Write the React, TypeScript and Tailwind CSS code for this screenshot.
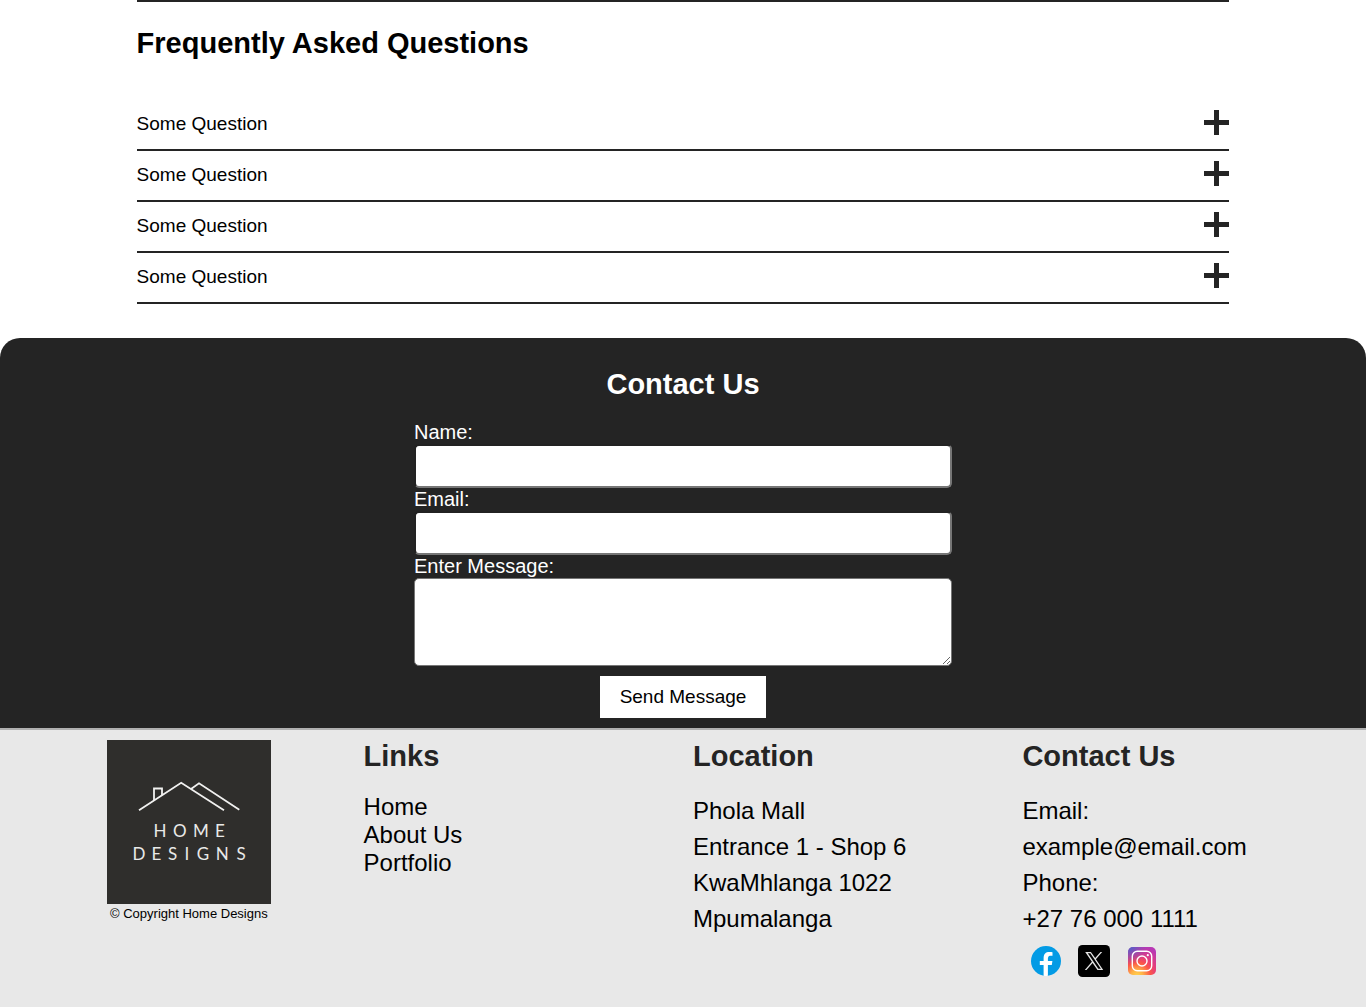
import { useId } from "react";

const questions = ["Some Question", "Some Question", "Some Question", "Some Question"];
const links = ["Home", "About Us", "Portfolio"];
const address = ["Phola Mall", "Entrance 1 - Shop 6", "KwaMhlanga 1022", "Mpumalanga"];

function Plus() {
  return (
    <svg className="size-[25px]" viewBox="0 0 25 25" fill="#242424" shapeRendering="crispEdges" aria-hidden="true">
      <path d="M10 0h5v10h10v5H15v10h-5V15H0v-5h10z" />
    </svg>
  );
}

function Logo() {
  return (
    <svg className="size-[164px]" viewBox="0 0 164 164" role="img" aria-label="Home Designs">
      <rect width="164" height="164" fill="#2f2e2c" />
      <g fill="none" stroke="#f1f1f0" strokeWidth="1.8">
        <path d="M32 70.3 74.2 42.7 117 70.3" />
        <path d="M84 49 92 43.3 132.3 69.8" />
        <path d="M47 60.3V48.500h8v6.800" />
      </g>
      <g fill="#e9e9e8" fontFamily="Lato, sans-serif" fontSize="17" textAnchor="middle">
        <text x="53 72.700 94 113" y="97">HOME</text>
        <text x="32 49.500 65.700 80 96 115.300 134" y="119.500">DESIGNS</text>
      </g>
    </svg>
  );
}

function FacebookIcon() {
  return (
    <svg className="size-8" viewBox="0 0 32 32" aria-hidden="true">
      <circle cx="16" cy="16" r="15" fill="#039be5" />
      <path fill="#fff" d="M17.900 20h3.900l.6-4h-4.500v-2.200c0-1.600.6-3.100 2.100-3.100h2.500V7.200c-.4-.1-1.400-.2-3.100-.2-3.700 0-5.800 1.900-5.800 6.300V16H9.800v4h3.800v10.800c.8.1 1.500.2 2.300.2.700 0 1.400-.1 2-.2z" />
    </svg>
  );
}

function XIcon() {
  return (
    <svg className="size-8" viewBox="0 0 32 32" aria-hidden="true">
      <rect width="32" height="32" rx="4.500" fill="#000" />
      <path
        fill="#e4e4e4"
        fillRule="evenodd"
        d="M7.200 7h5.700l4.300 6.100L22.500 7h1.700l-6.300 7.200L25.200 25h-5.700l-4.900-7.100L8.500 25H6.800l7.100-8.200zm2.600 1.300 10.500 15.400h2.600L12.300 8.300z"
      />
    </svg>
  );
}

function InstagramIcon() {
  return (
    <svg className="size-8" viewBox="0 0 32 32" aria-hidden="true">
      <defs>
        <radialGradient id="ig-warm" cx="11" cy="31" r="30" gradientUnits="userSpaceOnUse">
          <stop offset="0" stopColor="#ffd54f" />
          <stop offset=".2" stopColor="#ffb347" />
          <stop offset=".45" stopColor="#fb5648" />
          <stop offset=".65" stopColor="#e63d7a" />
          <stop offset="1" stopColor="#b838b4" />
        </radialGradient>
        <radialGradient id="ig-cool" cx="3" cy="1" r="19" gradientUnits="userSpaceOnUse">
          <stop offset="0" stopColor="#4168c9" />
          <stop offset="1" stopColor="#7150c9" stopOpacity="0" />
        </radialGradient>
      </defs>
      <rect x="2" y="2" width="28" height="28" rx="5" fill="url(#ig-warm)" />
      <rect x="2" y="2" width="28" height="28" rx="5" fill="url(#ig-cool)" />
      <g fill="none" stroke="#fff" strokeWidth="1.400">
        <rect x="6.300" y="6.300" width="19.400" height="19.400" rx="5" />
        <circle cx="16" cy="16" r="5" />
      </g>
      <circle cx="21.800" cy="10.200" r="1.100" fill="#fff" />
    </svg>
  );
}

function TextField({ label, type }: { label: string; type: string }) {
  const id = useId();
  return (
    <>
      <label htmlFor={id} className="text-xl leading-[23px]">{label}</label>
      <input
        id={id}
        type={type}
        className="h-11 w-full rounded-[5px] border-2 border-[#767676] border-t-[#222222] border-l-[#222222] bg-white px-2 text-black"
      />
    </>
  );
}

export default function App() {
  return (
    <div className="bg-white font-['Liberation_Sans',Arial,sans-serif] text-black">
      <section className="mx-auto w-4/5 border-t-2 border-[#242424] pb-[34px]">
        <h2 className="pt-[25px] pb-10 text-[29px] leading-[33px] font-bold">Frequently Asked Questions</h2>
        {questions.map((question, index) => (
          <button
            key={index}
            type="button"
            className="flex w-full items-start justify-between border-b-2 border-[#242424] pt-2.5 pb-3 text-left"
          >
            <span className="text-[19px] leading-[27px]">{question}</span>
            <Plus />
          </button>
        ))}
      </section>

      <section className="rounded-t-[20px] bg-[#242424] pt-[30px] pb-2.5 text-white">
        <h2 className="text-center text-[29px] leading-[33px] font-bold">Contact Us</h2>
        <form className="mx-auto flex w-[538px] max-w-full flex-col pt-5">
          <TextField label="Name:" type="text" />
          <TextField label="Email:" type="email" />
          <label htmlFor="message" className="text-xl leading-[23px]">Enter Message:</label>
          <textarea
            id="message"
            className="h-[88px] w-full resize rounded-[5px] border border-[#767676] bg-white p-2 text-black"
          />
          <button type="button" className="mt-2.5 self-center bg-white px-5 py-2.5 text-[19px] leading-[22px] text-black">
            Send Message
          </button>
        </form>
      </section>

      <footer className="border-t-2 border-[#b0b0b0] bg-[#e8e8e8] pt-2.5 pb-[30px]">
        <div className="mx-auto grid w-[95%] grid-cols-4 gap-5">
          <div className="flex flex-col items-center">
            <Logo />
            <p className="pt-0.5 text-[13px] leading-4">© Copyright Home Designs</p>
          </div>
          <div>
            <h2 className="text-[29px] leading-[33px] font-bold text-[#242424]">Links</h2>
            <ul className="pt-5 text-2xl leading-7">
              {links.map((link) => (
                <li key={link}><a href="#">{link}</a></li>
              ))}
            </ul>
          </div>
          <div>
            <h2 className="text-[29px] leading-[33px] font-bold text-[#242424]">Location</h2>
            <div className="pt-5 text-2xl leading-9">
              {address.map((line) => (
                <p key={line}>{line}</p>
              ))}
            </div>
          </div>
          <div>
            <h2 className="text-[29px] leading-[33px] font-bold text-[#242424]">Contact Us</h2>
            <div className="pt-5 text-2xl leading-9">
              <p>Email:</p>
              <p>example@email.com</p>
              <p>Phone:</p>
              <p>+27 76 000 1111</p>
            </div>
            <div className="flex gap-4 px-2 pt-2">
              <a href="#" aria-label="Facebook"><FacebookIcon /></a>
              <a href="#" aria-label="X"><XIcon /></a>
              <a href="#" aria-label="Instagram"><InstagramIcon /></a>
            </div>
          </div>
        </div>
      </footer>
    </div>
  );
}
